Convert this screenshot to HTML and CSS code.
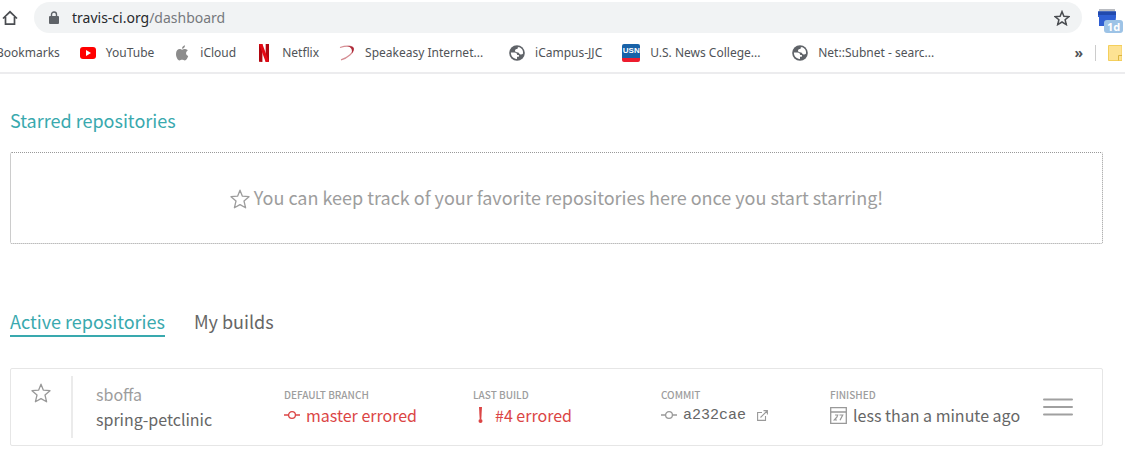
FILE: index.html
```html
<!DOCTYPE html>
<html lang="en">
<head>
<meta charset="utf-8">
<meta name="viewport" content="width=device-width, initial-scale=1">
<title>Travis CI - Dashboard</title>
<link rel="stylesheet" href="styles.css">
</head>
<body>
<svg class="sprite" aria-hidden="true">
  <symbol id="star" viewBox="0 0 20 20"><path d="M10 1.200l2.400 6 6.600.5-5 4.300 1.600 6.800L10 15.600l-5.600 3.200L6 12 1 7.700l6.600-.5z" fill="none" stroke="currentColor" stroke-width="1.300" stroke-linejoin="round"/></symbol>
  <symbol id="globe" viewBox="0 0 16 16"><circle cx="8" cy="8" r="7.800" fill="#5f6368"/><path d="M1.900 7.600h3.600c1.800 0 2.700 1 2.700 2.300h1.700v1.800H8v2.200C4.700 14.100 1.800 11.500 1.900 7.600zM6 5.400c.2-1.300 1.300-1.500 2.500-1.500 0-1.100.5-1.700 1.400-1.800 2.700.8 4.400 3.200 4.200 6.300-.7 1-2 1.400-3.100.9-.8-.4-.9-1.700-2-1.900C7.300 7.100 6 7 6 5.400z" fill="#fff"/></symbol>
  <symbol id="commit" viewBox="0 0 16 10"><path d="M0 5h4.500M11.500 5H16" stroke="currentColor" stroke-width="1.300"/><circle cx="8" cy="5" r="3.400" fill="none" stroke="currentColor" stroke-width="1.300"/></symbol>
</svg>

<header class="browser">
  <div class="toolbar">
    <button class="icon-button home" aria-label="Home"><svg width="16" height="16" viewBox="0 0 16 16"><path d="M1 8.500L8 1.800l7 6.700M3.500 7v7.200h9V7" fill="none" stroke="#4a4d51" stroke-width="1.700"/></svg></button>
    <div class="omnibox">
      <svg class="lock" width="10" height="14" viewBox="0 0 10 14"><path d="M2.500 6V3.500a2.500 2.500 0 0 1 5 0V6" fill="none" stroke="#5f6368" stroke-width="1.400"/><rect y="5" width="10" height="8" rx="1" fill="#5f6368"/></svg>
      <div class="url"><b>travis-ci.org</b>/dashboard</div>
      <button class="icon-button" aria-label="Bookmark this tab"><svg width="16" height="16" viewBox="0 0 16 16"><path d="M8 1.600l1.900 4.600 5 .4-3.800 3.200 1.200 4.800L8 12l-4.300 2.600 1.200-4.800L1.100 6.600l5-.4z" fill="none" stroke="#4a4d51" stroke-width="1.500"/></svg></button>
    </div>
    <button class="icon-button extension" aria-label="Extension, 1d">
      <svg width="18" height="17" viewBox="0 0 18 17"><path d="M1 0h16v3H1z" fill="#b9bcc2"/><path d="M0 2.500h18V8l-1 9H1V8H0z" fill="#2f5fd3"/><path d="M0 2.500h18V6H0z" fill="#2149ad"/></svg>
      <span class="badge">1d</span>
    </button>
  </div>
  <nav class="bookmarks" aria-label="Bookmarks">
    <a class="mark clipped" href="#">Bookmarks</a>
    <a class="mark" href="#"><svg width="16" height="16" viewBox="0 0 16 16"><rect y="2" width="16" height="12" rx="3" fill="#f00"/><path d="M6 5l5 3-5 3z" fill="#fff"/></svg>YouTube</a>
    <a class="mark" href="#"><svg width="16" height="16" viewBox="0 0 16 16"><path d="M8 4.700c1 0 1.900-.8 3.200-.7 1.100.1 2 .6 2.500 1.400-2.400 1.500-2 4.500.5 5.500-.6 1.800-1.900 4.500-3.400 4.500-1 0-1.400-.6-2.700-.6s-1.700.6-2.600.6C3.700 15.400 2 12 2 9c0-3.200 1.800-5 3.700-5 .9 0 1.700.7 2.300.7zM8 3.800C7.900 2 9.400.5 11 .3c.2 1.800-1.400 3.500-3 3.500z" fill="#8c8c8c"/></svg>iCloud</a>
    <a class="mark" href="#"><svg width="16" height="18" viewBox="0 0 16 18"><path d="M3 0h3.400v18L3 17.800zM9.700 0H13v17.800L9.700 18z" fill="#b1060f"/><path d="M3 0h3.400L13 17.800 9.700 18z" fill="#e50914"/></svg>Netflix</a>
    <a class="mark long" href="#"><svg width="16" height="16" viewBox="0 0 16 16"><path d="M1 2.500C8 .2 14 .8 14.300 4 14.500 7.500 9 13 2 14.800" fill="none" stroke="#d58d93" stroke-width="1.200"/><path d="M8 1c4-.3 6.500.7 6.800 2.600.2 1.300-.5 3-1.900 4.900.3-3 .3-6.200-4.900-7.500z" fill="#ae2837"/></svg>Speakeasy Internet...</a>
    <a class="mark" href="#"><svg width="16" height="16"><use href="#globe"/></svg>iCampus-JJC</a>
    <a class="mark long" href="#"><span class="usn">USN</span>U.S. News College...</a>
    <a class="mark long" href="#"><svg width="16" height="16"><use href="#globe"/></svg>Net::Subnet - searc...</a>
    <button class="more" aria-label="More bookmarks">»</button>
    <span class="folder"><svg width="14" height="16" viewBox="0 0 14 16"><path d="M.5.5H14v15H.5z" fill="#fde293" stroke="#f4cf5c"/><path d="M10.500 15.500v-5H14" fill="#fde293" stroke="#dcb53f"/></svg></span>
  </nav>
</header>

<main class="dashboard">
  <section>
    <h2 class="heading">Starred repositories</h2>
    <p class="empty"><svg width="20" height="20"><use href="#star"/></svg>You can keep track of your favorite repositories here once you start starring!</p>
  </section>

  <section class="active">
    <nav class="tabs" aria-label="Repositories">
      <a class="tab current" href="#" aria-current="page">Active repositories</a>
      <a class="tab" href="#">My builds</a>
    </nav>
    <article class="repo">
      <button class="star" aria-label="Star repository"><svg width="20" height="20"><use href="#star"/></svg></button>
      <div class="name"><a class="owner" href="#">sboffa</a><a href="#">spring-petclinic</a></div>
      <div class="cell">
        <h3>Default branch</h3>
        <a class="value errored" href="#"><svg width="16" height="10"><use href="#commit"/></svg>master errored</a>
      </div>
      <div class="cell">
        <h3>Last build</h3>
        <a class="value errored" href="#"><svg width="16" height="16" viewBox="0 0 16 16"><path d="M6 0h3l-.7 12H6.700z" fill="currentColor"/><circle cx="7.500" cy="14" r="2" fill="currentColor"/></svg>#4 errored</a>
      </div>
      <div class="cell">
        <h3>Commit</h3>
        <a class="value" href="#"><svg width="16" height="10"><use href="#commit"/></svg><code>a232cae</code><svg class="external" width="11" height="11" viewBox="0 0 11 11"><path d="M5 2.500H.6v7.900h7.900V6M3.500 7.500L10 1M6.500.6h3.900v3.900" fill="none" stroke="currentColor" stroke-width="1.100"/></svg></a>
      </div>
      <div class="cell">
        <h3>Finished</h3>
        <div class="value"><svg width="17" height="17" viewBox="0 0 17 17"><path d="M.7.7h15.600v15.600H.7zM.7 5h15.600" fill="none" stroke="currentColor" stroke-width="1.300"/><path d="M5 8h2.700L7 10l-2.700 3H7M9.500 8h3.200L10 13.200" fill="none" stroke="currentColor" stroke-width="1.200"/></svg>less than a minute ago</div>
      </div>
      <button class="menu" aria-label="Repository menu"><svg width="30" height="18" viewBox="0 0 30 18"><path d="M1 1.500h28M1 9h28M1 16.500h28" stroke="#a0a0a0" stroke-width="2" stroke-linecap="round"/></svg></button>
    </article>
  </section>
</main>
</body>
</html>
```
FILE: styles.css
```css
* { box-sizing: border-box; }
body {
  margin: 0;
  background: #fff;
  color: #666;
  font-family: "Noto Sans CJK SC", "Noto Sans", sans-serif;
  font-size: 16px;
  overflow-x: hidden;
}
h2, h3, p { margin: 0; font-weight: 400; }
a { color: inherit; text-decoration: none; }
button {
  padding: 0;
  border: 0;
  background: none;
  color: inherit;
  font: inherit;
  cursor: pointer;
}
svg { display: block; flex: none; }
.sprite { position: absolute; width: 0; height: 0; }

/* Browser bar */
.browser {
  border-bottom: 2px solid #ececee;
  font-family: "Noto Sans", sans-serif;
}
.toolbar {
  display: flex;
  align-items: center;
  gap: 16px;
  padding: 2px 9px 0 2px;
}
.omnibox {
  display: flex;
  align-items: center;
  flex: 1;
  height: 31px;
  padding: 0 12px 0 15px;
  border-radius: 16px;
  background: #f1f3f4;
}
.url {
  flex: 1;
  margin-left: 13px;
  color: #76797d;
  font-size: 14px;
}
.url b { color: #27292c; font-weight: 400; }
.extension { position: relative; }
.badge {
  position: absolute;
  left: 6px;
  top: 11px;
  padding: 0 3px;
  border-radius: 3px;
  background: #9dc3e6;
  color: #fff;
  font-size: 11px;
  font-weight: 700;
  line-height: 13px;
}
.bookmarks {
  display: flex;
  align-items: center;
  gap: 20px;
  height: 39px;
  padding-right: 3px;
  color: #505357;
  font-size: 12px;
  white-space: nowrap;
}
.mark { display: flex; align-items: center; gap: 10px; }
.long { min-width: 150px; }
.clipped { margin-left: -4px; }
.usn {
  width: 18px;
  height: 18px;
  border-bottom: 4px solid #ed1c2e;
  border-radius: 2px;
  background: #1862a8;
  color: #fff;
  font: 700 8px/14px "Liberation Sans", sans-serif;
  text-align: center;
}
.more {
  margin-left: auto;
  margin-right: -8px;
  font-size: 14px;
  font-weight: 700;
}
.folder { padding-left: 12px; border-left: 1px solid #ccc; }

/* Dashboard */
.dashboard { padding: 32px 22px 20px 10px; }
.heading, .tab { font-size: 18px; line-height: 28px; }
.heading { color: #39a9ae; }
.empty {
  display: flex;
  align-items: center;
  justify-content: center;
  gap: 4px;
  min-height: 92px;
  margin-top: 18px;
  padding-bottom: 2px;
  border: 1px dotted #999;
  border-radius: 2px;
  color: #9d9d9d;
  font-size: 18px;
}
.empty svg { margin-top: 4px; }
.active { margin-top: 63px; }
.tabs { display: flex; gap: 29px; }
.tab { border-bottom: 2px solid transparent; }
.current { border-color: #39a9ae; color: #39a9ae; }
.repo {
  display: grid;
  grid-template-columns: 62px 188px 189px 188px 169px 1fr auto;
  align-items: start;
  margin-top: 31px;
  padding: 7px 29px 7px 0;
  border: 1px solid #e6e6e6;
  border-radius: 2px;
}
.star {
  display: flex;
  justify-content: center;
  align-self: stretch;
  padding-top: 7px;
  border-right: 2px solid #ebebeb;
  color: #999;
}
.name {
  display: grid;
  padding: 6px 0 6px 23px;
  line-height: 25px;
}
.owner { color: #9d9d9d; }
.cell { padding-top: 12px; padding-left: 23px; }
.cell h3 {
  color: #9d9d9d;
  font-size: 10px;
  font-weight: 500;
  line-height: 14px;
  text-transform: uppercase;
}
.value {
  display: flex;
  align-items: center;
  gap: 6px;
  min-height: 26px;
  line-height: 26px;
  white-space: nowrap;
}
.value svg { color: #999; }
.errored, .errored svg { color: #db4545; }
.value code { font: 15px "Liberation Mono", monospace; }
.value .external { margin-left: 5px; }
.menu { align-self: center; }
```
